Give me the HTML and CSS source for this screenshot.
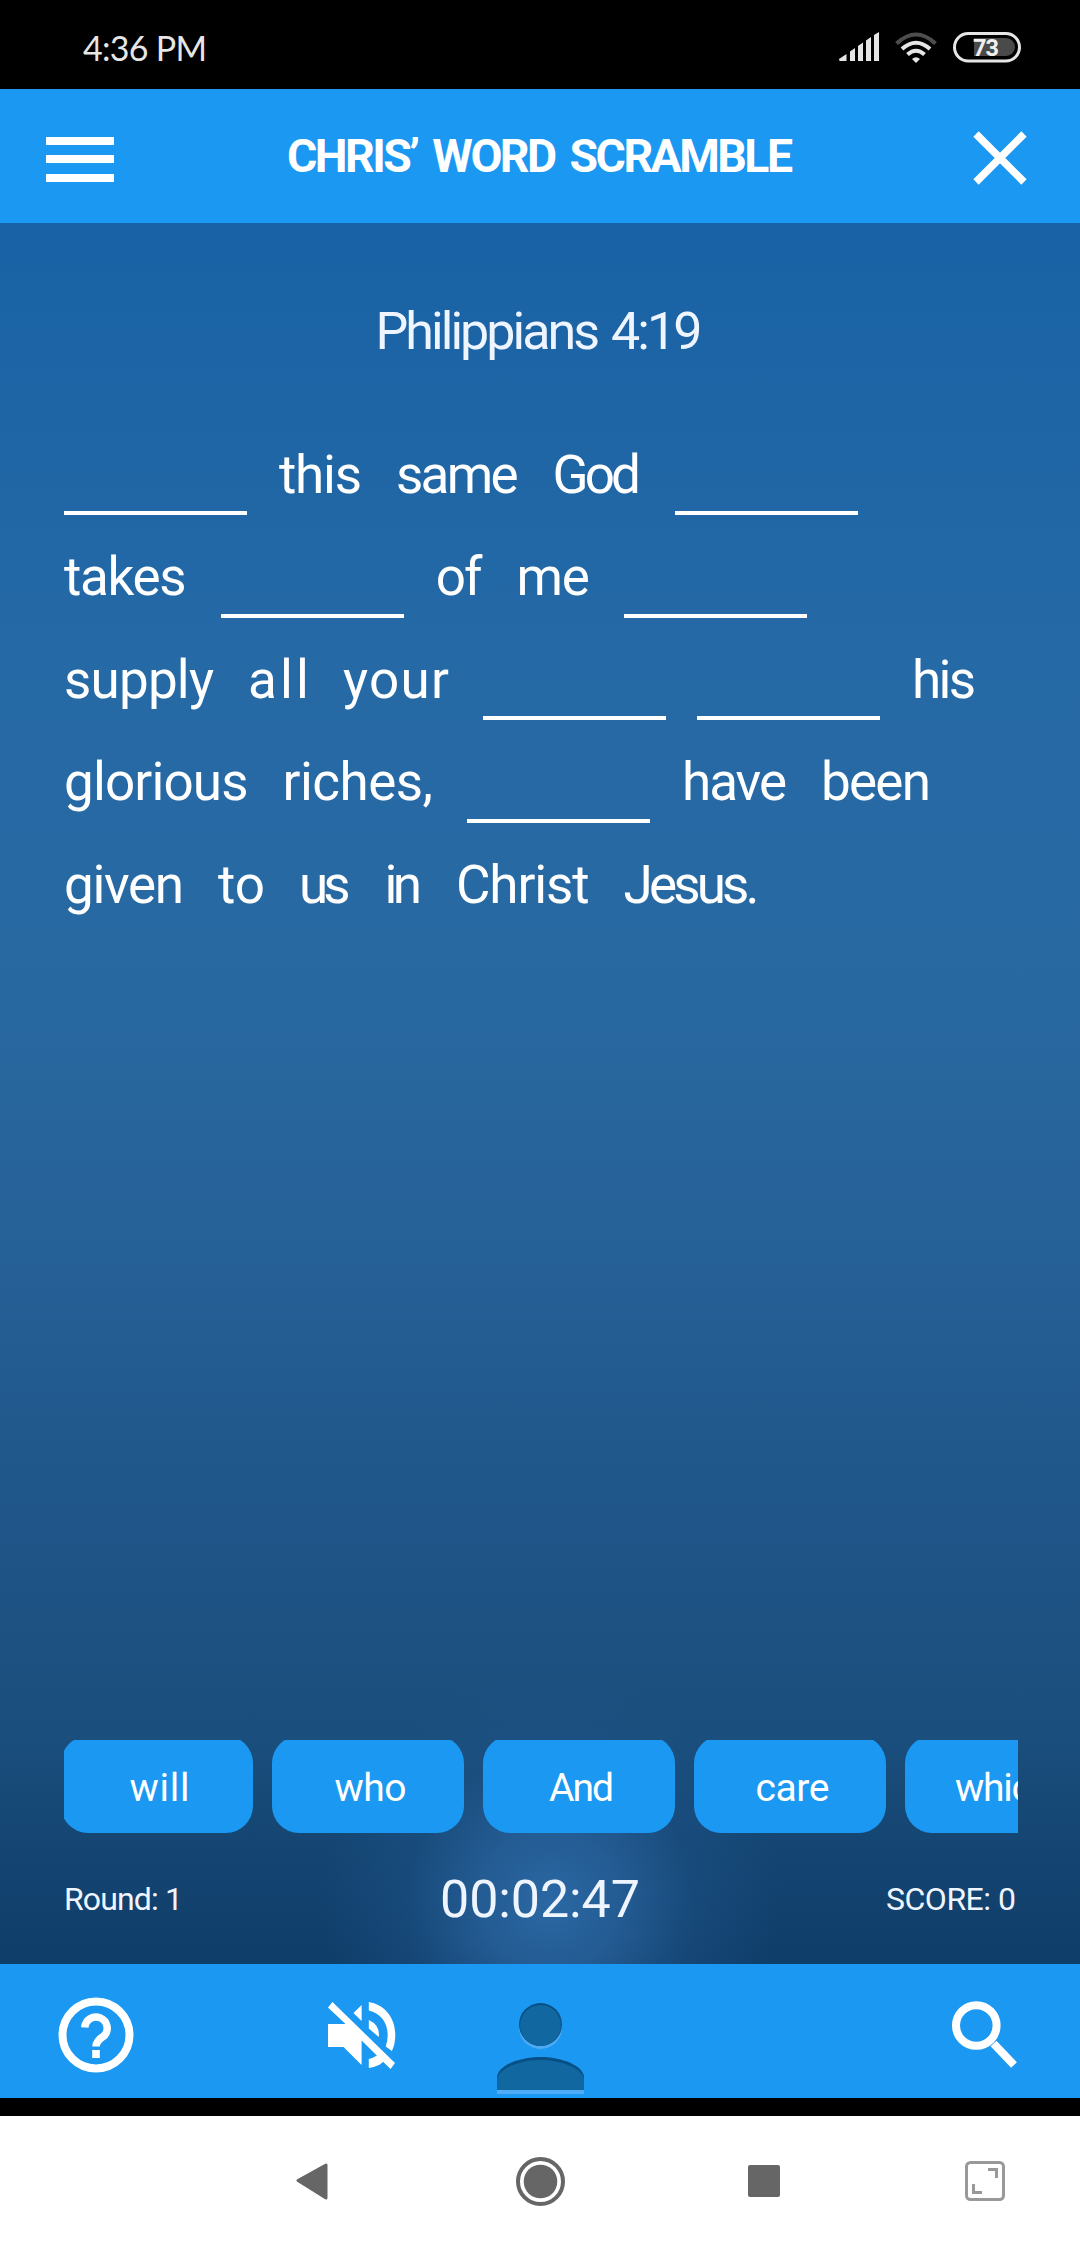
FILE: index.html
```html
<!DOCTYPE html>
<html lang="en">

<head>
  <meta charset="UTF-8" />
  <meta name="viewport" content="width=device-width, initial-scale=1.0" />
  <title>Chris' Word Scramble</title>
  <link rel="stylesheet" href="styles.css">
</head>

<body>
  <div class="status">
    <span class="clock" data-w="126">4:36 PM</span>
    <svg class="signal" width="184" height="32" viewBox="838 31 184 32">
      <g fill="#e6e6e6">
        <path d="M839 59L846.500 54V61H840Q839 61 839 59Z" />
        <path d="M850 51.500L855 48V61H850Z" />
        <path d="M858 46L863 42.500V61H858Z" />
        <path d="M866 40.500L871 37V61H866Z" />
        <path d="M874 35L879 32V61H874Z" />
      </g>
      <g fill="none" stroke="#e6e6e6" stroke-width="4">
        <path d="M896.500 43.500Q916 25.500 935.500 43.500" stroke="#4d4d4d" />
        <path d="M902 49Q916 36.500 930 49" />
        <path d="M907.500 54.500Q916 47 924.500 54.500" />
      </g>
      <path d="M912 59Q916 55.500 920 59L916 63Z" fill="#e6e6e6" />
      <path d="M974 38H1006A9 9 0 0 1 1006 56H974Z" fill="#4a4a4a" />
      <rect x="954.500" y="33.500" width="65" height="27.500" rx="13.700" fill="none" stroke="#e6e6e6" stroke-width="3" />
      <text x="973" y="56" class="battery">73</text>
    </svg>
  </div>

  <header class="bar header">
    <svg width="68" height="134" viewBox="0 0 68 134" fill="#fff">
      <rect y="48" width="68" height="8" />
      <rect y="66" width="68" height="8" />
      <rect y="85" width="68" height="8" />
    </svg>
    <h1 data-w="508">CHRIS’ WORD SCRAMBLE</h1>
    <svg width="54" height="134" viewBox="0 0 54 134">
      <path d="M3 45L51 93M51 45L3 93" stroke="#fff" stroke-width="7.500" />
    </svg>
  </header>

  <main class="game">
    <h2><span data-w="329">Philippians 4:19</span></h2>

    <div class="verse">
      <div class="row">
        <i class="blank"></i>
        <span data-w="85">this</span>
        <span data-w="124.5">same</span>
        <span data-w="90.5">God</span>
        <i class="blank"></i>
      </div>
      <div class="row">
        <span data-w="124.7">takes</span>
        <i class="blank"></i>
        <span data-w="48.8">of</span>
        <span data-w="75.5">me</span>
        <i class="blank"></i>
      </div>
      <div class="row">
        <span data-w="152">supply</span>
        <span data-w="63">all</span>
        <span data-w="108">your</span>
        <i class="blank"></i>
        <i class="blank"></i>
        <span data-w="66">his</span>
      </div>
      <div class="row">
        <span data-w="186.5">glorious</span>
        <span data-w="152.5">riches,</span>
        <i class="blank"></i>
        <span data-w="107">have</span>
        <span data-w="112">been</span>
      </div>
      <div class="row">
        <span data-w="122">given</span>
        <span data-w="49">to</span>
        <span data-w="53.5">us</span>
        <span data-w="39.5">in</span>
        <span data-w="135.5">Christ</span>
        <span data-w="138">Jesus.</span>
      </div>
    </div>

    <div class="choices">
      <div class="chip"><span data-w="62">will</span></div>
      <div class="chip"><span data-w="74">who</span></div>
      <div class="chip"><span data-w="67">And</span></div>
      <div class="chip"><span data-w="76">care</span></div>
      <div class="chip"><span data-w="99">which</span></div>
    </div>

    <div class="stats">
      <div><span data-w="121">Round: 1</span></div>
      <div class="timer"><span data-w="202">00:02:47</span></div>
      <div class="score"><span data-w="132">SCORE: 0</span></div>
    </div>
  </main>

  <footer class="bar tools">
    <svg class="help" width="76" height="134" viewBox="0 0 76 134">
      <circle cx="38" cy="71" r="33.500" fill="none" stroke="#fff" stroke-width="8" />
      <path d="M26.800 63.500A11.200 11.200 0 1 1 46.500 71.500Q38 77 38 82.500" fill="none" stroke="#fff" stroke-width="7.500" />
      <rect x="34.200" y="86" width="7.600" height="8" fill="#fff" />
    </svg>
    <svg class="mute" width="68" height="134" viewBox="328 0 68 134" fill="#fff">
      <path d="M328 43.500L332.500 38L395 99L390.500 105L361.600 76.500V101L343.500 83H328V60H345.500Z" />
      <path d="M361.600 41V57L353.500 49Z" />
      <path d="M368.800 56Q380 61 378.800 73L368.800 64.500Z" />
      <path d="M368.800 38C386 41 395.300 55 395.300 71Q395.300 80 391.900 87L385.700 82.500Q387.700 77 387.700 71C387.700 58 380 49 368.800 46.500Z" />
      <path d="M368.800 95Q373 94 377 91.500L384 97L380 100.500Q375 103 368.800 104Z" />
    </svg>
    <svg class="user" width="90" height="134" viewBox="495 0 90 134">
      <g fill="#50abf6">
        <circle cx="540.500" cy="63.500" r="21.500" />
        <path d="M497 130V117C498 105 520 98 540.500 98S583 105 584 117V130Z" />
      </g>
      <g fill="#075086">
        <circle cx="540.500" cy="60.500" r="21.500" />
        <path d="M497 126V113C498 101 520 93 540.500 93S583 101 584 113V126Z" />
      </g>
      <g fill="#1167a0">
        <circle cx="540.500" cy="61.500" r="20.500" />
        <path d="M497 126V115C499 104 520 96 540.500 96S582 104 584 115V126Z" />
      </g>
    </svg>
    <svg class="search" width="66" height="134" viewBox="951 0 66 134" fill="none" stroke="#fff" stroke-width="8">
      <circle cx="976.300" cy="61.500" r="20.300" />
      <path d="M993.500 79.500L1014 101" />
    </svg>
  </footer>

  <nav class="nav">
    <svg class="back" width="32" height="130" viewBox="296 0 32 130">
      <path d="M298 64.500L326 49V82Z" fill="#666" stroke="#666" stroke-width="3" stroke-linejoin="round" />
    </svg>
    <svg class="home" width="50" height="130" viewBox="515 0 50 130">
      <circle cx="540.500" cy="65.500" r="22.500" fill="none" stroke="#666" stroke-width="4" />
      <circle cx="540.500" cy="65.500" r="16.800" fill="#666" />
    </svg>
    <svg class="recent" width="32" height="130" viewBox="748 0 32 130">
      <rect x="748" y="49" width="32" height="32" rx="2" fill="#666" />
    </svg>
    <svg class="expand" width="40" height="130" viewBox="965 0 40 130" fill="none" stroke="#999" stroke-width="3">
      <rect x="966.500" y="46.500" width="37" height="37" rx="4" />
      <path d="M988 53.500H996.500V62M973.500 68V76.500H982" />
    </svg>
  </nav>

  <script src="script.js"></script>
</body>

</html>
```

FILE: styles.css
```css
:root {
  --blue: #1b98f2;
  --edge: 64px;
}

*,
::before,
::after {
  box-sizing: border-box;
}

body {
  margin: 0;
  width: 1080px;
  height: 2246px;
  overflow: hidden;
  background: black;
  color: white;
  font-family: Roboto, "Liberation Sans", sans-serif;
}

svg {
  display: block;
  flex: none;
}

[data-w] {
  display: inline-block;
  flex: none;
  white-space: nowrap;
  text-align: left;
}

/* phone status bar */
.status {
  height: 89px;
  padding: 0 58px 0 83px;
  display: flex;
  justify-content: space-between;
}

.clock {
  font: 34px/95px Lato, sans-serif;
  color: #e6e6e6;
}

.signal {
  margin-top: 31px;
}

.battery {
  font-size: 23.5px;
  font-weight: 700;
  fill: #f0f0f0;
  letter-spacing: -1px;
}

.bar {
  height: 134px;
  background: var(--blue);
  display: flex;
}

.header {
  padding: 0 53px 0 46px;
  justify-content: space-between;
}

h1 {
  margin: 0 5px 0 0;
  font-size: 46.4px;
  font-weight: 700;
  line-height: 135px;
  word-spacing: 6px;
}

/* game */
.game {
  height: 1741px;
  padding: 79px 0 0;
  display: flex;
  flex-direction: column;
  background:
    radial-gradient(circle at 550px 1680px, #2b68a4 0, rgba(40, 98, 156, 0.8) 70px, rgba(30, 84, 138, 0.4) 145px, rgba(20, 70, 120, 0) 230px),
    linear-gradient(#1862a5 0, #2569a6 24%, #2869a2 42%, #27639a 55%, #1f5588 75%, #1a4e7c 87%, #134370 95%, #0f3d69 100%);
}

h2 {
  margin: 0 0 61.5px;
  font-size: 52px;
  font-weight: 400;
  line-height: 60px;
  text-align: center;
  color: #eef5ff;
  word-spacing: 4px;
}

.verse {
  padding-left: var(--edge);
  font-size: 53px;
  line-height: 103px;
}

.row {
  display: flex;
  gap: 32px;
  height: 102.5px;
}

.blank {
  flex: none;
  width: 183px;
  height: 91.5px;
  border-bottom: 4px solid white;
}

.blank + .blank {
  margin-left: -1px;
}

.choices {
  margin: auto 62px 0 var(--edge);
  height: 93px;
  overflow: hidden;
  display: flex;
  gap: 19px;
}

.chip {
  flex: none;
  width: 192px;
  height: 97px;
  margin-top: -4px;
  padding-left: 7px;
  border-radius: 27px;
  background: var(--blue);
  font-size: 39px;
  line-height: 105px;
  text-align: center;
}

.chip:first-child {
  margin-left: -3px;
}

.stats {
  height: 131px;
  padding: 0 62px 0 var(--edge);
  display: grid;
  grid-template-columns: 1fr auto 1fr;
  font-size: 32px;
  line-height: 133px;
  color: #eef5ff;
}

.timer {
  font-size: 52px;
  line-height: 134px;
}

.score {
  text-align: right;
}

/* bottom tools */
.help {
  margin-left: 58px;
}

.mute {
  margin-left: 194px;
}

.user {
  margin-left: 99px;
}

.search {
  margin-left: 366px;
}

.nav {
  height: 130px;
  margin-top: 18px;
  background: white;
  display: flex;
}

.back {
  margin-left: 296px;
}

.home {
  margin-left: 187px;
}

.recent {
  margin-left: 183px;
}

.expand {
  margin-left: 185px;
}
```

FILE: script.js
```js
// stretch or tighten each label to its own width, minus the side bearing
const BEARING = 2;

document.querySelectorAll('[data-w]').forEach((el) => {
  const width = Number(el.dataset.w);
  const natural = el.getBoundingClientRect().width;
  const gaps = el.textContent.length - 1;
  el.style.letterSpacing = (width - BEARING - natural) / gaps + 'px';
  el.style.width = width + 'px';
});
```
